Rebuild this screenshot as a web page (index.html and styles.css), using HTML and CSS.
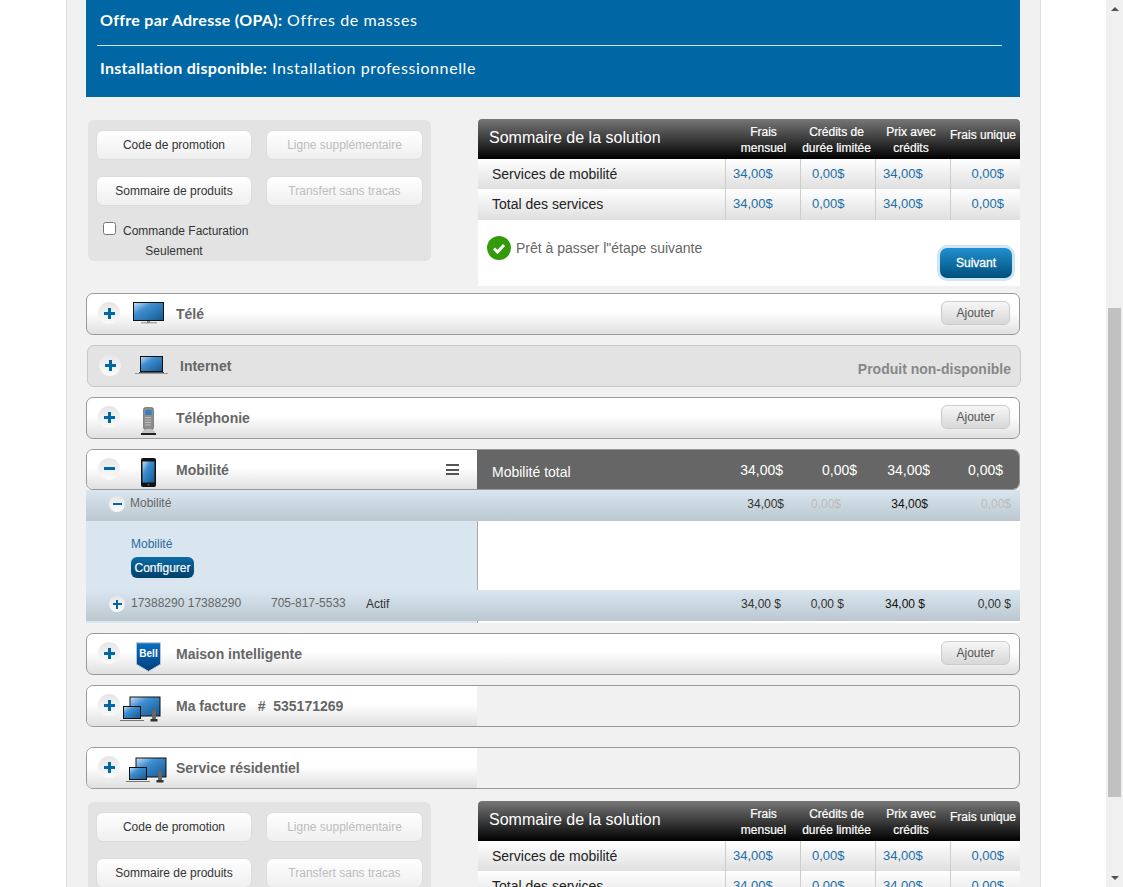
FILE: index.html
```html
<!DOCTYPE html>
<html lang="fr">
<head>
  <meta charset="UTF-8">
  <title>Sommaire de la solution</title>
  <link rel="stylesheet" href="styles.css">
</head>
<body>

  <svg class="defs" width="0" height="0">
    <defs>
      <linearGradient id="screen" x1="0" y1="0" x2="1" y2="1">
        <stop offset="0" stop-color="#cfe2f3"/>
        <stop offset="0.35" stop-color="#3f8fd2"/>
        <stop offset="1" stop-color="#14578f"/>
      </linearGradient>
      <linearGradient id="shield" x1="0" y1="0" x2="0" y2="1">
        <stop offset="0" stop-color="#0a6fc0"/>
        <stop offset="1" stop-color="#003f7d"/>
      </linearGradient>
    </defs>
  </svg>

  <div class="page">
    <main class="sheet">

      <section class="banner">
        <p class="banner-line"><b>Offre par Adresse (OPA):</b> Offres de masses</p>
        <hr class="banner-rule">
        <p class="banner-line"><b>Installation disponible:</b> Installation professionnelle</p>
      </section>

      <section class="summary-block">
        <div class="actions">
          <div class="action-grid">
            <button class="action">Code de promotion</button>
            <button class="action off">Ligne supplémentaire</button>
            <button class="action">Sommaire de produits</button>
            <button class="action off">Transfert sans tracas</button>
          </div>
          <label class="billing"><input type="checkbox"><span>Commande Facturation<br><em>Seulement</em></span></label>
        </div>
        <div class="solution">
          <div class="sol-grid sol-head">
            <div class="sol-title">Sommaire de la solution</div>
            <div>Frais<br>mensuel</div>
            <div>Crédits de<br>durée limitée</div>
            <div>Prix avec<br>crédits</div>
            <div class="one-line">Frais unique</div>
          </div>
          <div class="sol-grid sol-row">
            <div class="sol-name">Services de mobilité</div>
            <div class="val v1">34,00$</div><div class="val v2">0,00$</div><div class="val v1">34,00$</div><div class="val v4">0,00$</div>
          </div>
          <div class="sol-grid sol-row tall">
            <div class="sol-name">Total des services</div>
            <div class="val v1">34,00$</div><div class="val v2">0,00$</div><div class="val v1">34,00$</div><div class="val v4">0,00$</div>
          </div>
          <div class="sol-foot">
            <div class="ready">
              <svg class="check" width="24" height="24" viewBox="0 0 24 24"><circle cx="12" cy="12" r="12" fill="#339a09"/><path d="M7 12.500l3.500 3.500 6.500-7" fill="none" stroke="#fff" stroke-width="3"/></svg>
              <span>Prêt à passer l"étape suivante</span>
            </div>
            <button class="next">Suivant</button>
          </div>
        </div>
      </section>

      <div class="row">
        <span class="toggle"></span>
        <span class="icon">
          <svg width="32" height="24" viewBox="0 0 32 24"><rect x="0.500" y="0.500" width="30" height="18" fill="url(#screen)" stroke="#111"/><rect x="8" y="20" width="16" height="1.500" fill="#aaa"/><rect x="14" y="19" width="3" height="2" fill="#888"/></svg>
        </span>
        <span class="row-name">Télé</span>
        <button class="add">Ajouter</button>
      </div>

      <div class="row off">
        <span class="toggle"></span>
        <span class="icon wide">
          <svg width="34" height="20" viewBox="0 0 34 20"><rect x="5.500" y="0.500" width="22" height="15" fill="url(#screen)" stroke="#111"/><rect x="0" y="17" width="33" height="1" fill="#999"/><rect x="4" y="16" width="25" height="1" fill="#555"/></svg>
        </span>
        <span class="row-name">Internet</span>
        <span class="unavailable">Produit non-disponible</span>
      </div>

      <div class="row">
        <span class="toggle"></span>
        <span class="icon low">
          <svg width="32" height="28" viewBox="0 0 32 28"><rect x="10.500" y="0.500" width="10" height="22" rx="2" fill="#8d8d8d" stroke="#555" stroke-width="0.600"/><rect x="12.500" y="3" width="6" height="5" fill="#2f7fc4"/><path d="M12.500 10.500h6M12.500 13h6M12.500 15.500h6M12.500 18h6" stroke="#eee" stroke-dasharray="1 1"/><path d="M9 26c0-2 2-4 6.500-4s6.500 2 6.500 4z" fill="#c4c4c4"/><rect x="8" y="26" width="15" height="2" fill="#222"/></svg>
        </span>
        <span class="row-name">Téléphonie</span>
        <button class="add">Ajouter</button>
      </div>

      <div class="mobility">
        <div class="row open">
          <div class="open-left">
            <span class="toggle minus"></span>
            <span class="icon low">
              <svg width="32" height="29" viewBox="0 0 32 29"><rect x="8" y="0" width="15" height="29" rx="2" fill="#111"/><rect x="9.500" y="3.500" width="12" height="21" fill="url(#screen)"/><circle cx="15.500" cy="26.800" r="1" fill="#555"/></svg>
            </span>
            <span class="row-name">Mobilité</span>
            <span class="burger"></span>
          </div>
          <div class="open-right">
            <span class="total-name">Mobilité total</span>
            <span class="total-val">34,00$</span><span class="total-val">0,00$</span><span class="total-val">34,00$</span><span class="total-val">0,00$</span>
          </div>
        </div>

        <div class="band first">
          <span class="toggle small minus"></span>
          <span class="band-name">Mobilité</span>
          <div class="band-vals">
            <span class="b1">34,00$</span><span class="b2 faint">0,00$</span><span class="b3 dark">34,00$</span><span class="b4 faint">0,00$</span>
          </div>
        </div>

        <div class="detail">
          <div class="detail-left">
            <a class="detail-link">Mobilité</a>
            <button class="configure">Configurer</button>
          </div>
        </div>

        <div class="band second">
          <span class="toggle small"></span>
          <span class="band-name sn">17388290 17388290</span>
          <span class="band-name phone">705-817-5533</span>
          <span class="status">Actif</span>
          <div class="band-vals line">
            <span class="b1">34,00 $</span><span class="b2">0,00 $</span><span class="b3 dark">34,00 $</span><span class="b4">0,00 $</span>
          </div>
        </div>
        <div class="detail-end"><div></div></div>
      </div>

      <div class="row">
        <span class="toggle"></span>
        <span class="icon low-shield">
          <svg width="32" height="30" viewBox="0 0 32 30"><path d="M3.500 0.800h24v21.500l-12 7-12-7z" fill="url(#shield)" stroke="#b9c4cc"/><text x="15.500" y="15" text-anchor="middle" class="bell">Bell</text></svg>
        </span>
        <span class="row-name">Maison intelligente</span>
        <button class="add">Ajouter</button>
      </div>

      <div class="row half">
        <div class="half-left">
          <span class="toggle"></span>
          <span class="icon bundle">
            <svg width="42" height="26" viewBox="0 0 42 26"><rect x="10" y="1" width="30" height="19" fill="url(#screen)" stroke="#111"/><rect x="3.500" y="10.500" width="17" height="12" fill="url(#screen)" stroke="#111"/><rect x="0" y="24" width="24" height="1" fill="#777"/><rect x="32" y="14" width="4" height="9" rx="1" fill="#666"/><rect x="30.500" y="23" width="7" height="2.500" fill="#333"/></svg>
          </span>
          <span class="row-name">Ma facture &nbsp; # &nbsp;535171269</span>
        </div>
      </div>

      <div class="row half residential">
        <div class="half-left">
          <span class="toggle"></span>
          <span class="icon bundle">
            <svg width="42" height="26" viewBox="0 0 42 26"><rect x="10" y="1" width="30" height="19" fill="url(#screen)" stroke="#111"/><rect x="3.500" y="10.500" width="17" height="12" fill="url(#screen)" stroke="#111"/><rect x="0" y="24" width="24" height="1" fill="#777"/><rect x="32" y="14" width="4" height="9" rx="1" fill="#666"/><rect x="30.500" y="23" width="7" height="2.500" fill="#333"/></svg>
          </span>
          <span class="row-name">Service résidentiel</span>
        </div>
      </div>

      <section class="summary-block last">
        <div class="actions">
          <div class="action-grid">
            <button class="action">Code de promotion</button>
            <button class="action off">Ligne supplémentaire</button>
            <button class="action">Sommaire de produits</button>
            <button class="action off">Transfert sans tracas</button>
          </div>
        </div>
        <div class="solution">
          <div class="sol-grid sol-head">
            <div class="sol-title">Sommaire de la solution</div>
            <div>Frais<br>mensuel</div>
            <div>Crédits de<br>durée limitée</div>
            <div>Prix avec<br>crédits</div>
            <div class="one-line">Frais unique</div>
          </div>
          <div class="sol-grid sol-row">
            <div class="sol-name">Services de mobilité</div>
            <div class="val v1">34,00$</div><div class="val v2">0,00$</div><div class="val v1">34,00$</div><div class="val v4">0,00$</div>
          </div>
          <div class="sol-grid sol-row tall">
            <div class="sol-name">Total des services</div>
            <div class="val v1">34,00$</div><div class="val v2">0,00$</div><div class="val v1">34,00$</div><div class="val v4">0,00$</div>
          </div>
        </div>
      </section>

    </main>
  </div>

  <div class="scrollbar">
    <span class="arrow up"></span>
    <div class="track"><div class="thumb"></div></div>
    <span class="arrow down"></span>
  </div>

</body>
</html>
```

FILE: styles.css
```css
* {
  box-sizing: border-box;
}

html,
body {
  margin: 0;
  height: 887px;
  overflow: hidden;
}

body {
  display: flex;
  background-color: #fff;
  font-family: "Liberation Sans", Arial, sans-serif;
  font-size: 12px;
  color: #333;
}

.defs {
  position: absolute;
}

button {
  font-family: inherit;
  cursor: pointer;
}

.page {
  width: 1106px;
  flex: none;
  height: 887px;
  overflow: hidden;
}

.sheet {
  width: 975px;
  min-height: 1100px;
  margin-left: 66px;
  padding: 0 20px 0 19px;
  background-color: #f1f1f1;
  border-left: 1px solid #ddd;
  border-right: 1px solid #ddd;
}

/* blue banner */
.banner {
  width: 934px;
  height: 97px;
  padding: 0 18px 0 11px;
  background-color: #0066a4;
  color: #fff;
  font-family: Lato, "Open Sans", sans-serif;
  font-size: 16px;
}

.banner-line {
  height: 45px;
  margin: 0;
  padding: 10px 0 0 3px;
  line-height: 20px;
  letter-spacing: 0.6px;
}

.banner-line b {
  letter-spacing: 0.3px;
}

.banner-rule {
  height: 1px;
  margin: 0;
  border: 0;
  background-color: #cfe3f0;
}

.banner-line + .banner-rule + .banner-line {
  padding-top: 12px;
}

/* top block */
.summary-block {
  display: flex;
  align-items: flex-start;
  padding-top: 22px;
}

.summary-block.last {
  padding-top: 12px;
}

.actions {
  width: 343px;
  height: 141px;
  margin: 1px 47px 0 2px;
  padding: 10px 8px 0;
  background-color: #e3e3e3;
  border-radius: 6px;
}

.action-grid {
  display: grid;
  grid-template-columns: 156px 157px;
  column-gap: 14px;
  row-gap: 16px;
}

.action {
  height: 30px;
  padding: 0;
  background: linear-gradient(#fff, #efefef);
  border: 1px solid #dcdcdc;
  border-radius: 7px;
  font-size: 12px;
  color: #333;
}

.action.off {
  color: #bdbdbd;
}

.billing {
  display: flex;
  align-items: flex-start;
  margin: 15px 0 0 7px;
  line-height: 20px;
}

.billing input {
  width: 13px;
  height: 13px;
  margin: 1px 7px 0 0;
}

.billing em {
  display: block;
  width: 102px;
  font-style: normal;
  text-align: center;
}

/* solution table */
.solution {
  width: 542px;
  background-color: #fff;
}

.sol-grid {
  display: grid;
  grid-template-columns: 247px 75px 75px 75px 70px;
}

.sol-head {
  height: 40px;
  padding-top: 1px;
  align-items: center;
  background: linear-gradient(#777, #000);
  border-radius: 4px 4px 0 0;
  color: #fff;
  font-size: 12px;
  font-weight: normal;
  line-height: 16px;
  text-align: center;
  -webkit-text-stroke: 0.2px #fff;
}

.sol-head div:nth-child(2) {
  padding-left: 2px;
}

.sol-head div:nth-child(3) {
  padding-right: 2px;
}

.sol-head div:nth-child(4) {
  padding-right: 3px;
}

.sol-head .one-line {
  margin: 0 -3px 10px -7px;
  white-space: nowrap;
}

.sol-title {
  margin-top: -3px;
  padding-left: 11px;
  font-size: 16px;
  text-align: left;
  -webkit-text-stroke: 0;
}

.sol-row {
  height: 30px;
  background: linear-gradient(#fff, #dfdfdf);
}

.sol-row.tall {
  height: 31px;
}

.sol-name {
  padding: 7px 0 0 14px;
  font-size: 14px;
  color: #222;
}

.val {
  padding-top: 7px;
  font-size: 13px;
  color: #1b6fa8;
  border-left: 1px solid #ccc;
}

.v1 {
  padding-left: 7px;
}

.v2 {
  padding-left: 11px;
}

.v4 {
  padding-right: 16px;
  text-align: right;
}

.sol-foot {
  display: flex;
  justify-content: space-between;
  height: 66px;
  padding: 16px 8px 0 9px;
}

.ready {
  display: flex;
  align-items: flex-start;
  gap: 5px;
  font-size: 14px;
  color: #666;
}

.ready span {
  line-height: 24px;
}

.next {
  width: 72px;
  height: 30px;
  margin-top: 12px;
  background: linear-gradient(#2190cf, #004f7c);
  border: 0;
  border-radius: 7px;
  box-shadow: 0 0 0 3px #cfe5f2;
  font-size: 12px;
  color: #fff;
  -webkit-text-stroke: 0.3px #fff;
}

/* product rows */
.row {
  display: flex;
  align-items: center;
  width: 934px;
  height: 42px;
  margin-bottom: 10px;
  background: linear-gradient(#fff 45%, #e0e0e0);
  border: 1px solid #999;
  border-radius: 7px;
  overflow: hidden;
}

.summary-block + .row {
  margin-top: 7px;
}

.row.off {
  margin-left: 1px;
  background: #e3e3e3;
  border-color: #c8c8c8;
}

.toggle {
  flex: none;
  width: 22px;
  height: 22px;
  margin: -2px 13px 0 11px;
  border-radius: 50%;
  background:
    linear-gradient(#0066a4, #0066a4) center / 11px 3px no-repeat,
    linear-gradient(#0066a4, #0066a4) center / 3px 11px no-repeat,
    linear-gradient(#e6e6e6, #fafafa);
}

.toggle.minus {
  background:
    linear-gradient(#0066a4, #0066a4) center / 11px 3px no-repeat,
    linear-gradient(#e6e6e6, #fafafa);
}

.toggle.small {
  width: 16px;
  height: 16px;
  margin: 6px 6px 0 23px;
  background-size: 9px 2px, 2px 9px, auto;
}

.first .toggle.small {
  margin-right: 5px;
}

.toggle.small.minus {
  background-size: 9px 2px, auto;
}

.icon {
  display: flex;
  flex: none;
  justify-content: center;
  width: 32px;
  margin-right: 11px;
}

.icon svg {
  display: block;
}

.icon.low {
  margin-top: 6px;
}

.icon.low-shield {
  margin-top: 6px;
}

.icon.wide {
  width: 34px;
  margin: 0 11px 0 1px;
}

.icon.bundle {
  width: 42px;
  margin: 6px 14px 0 -13px;
}

.residential .icon.bundle {
  margin: 4px 8px 0 -7px;
}

.row-name {
  font-size: 14px;
  font-weight: bold;
  color: #666;
  white-space: pre;
}

.add {
  width: 69px;
  height: 24px;
  margin: -2px 9px 0 auto;
  padding: 0;
  background: linear-gradient(#f6f6f6, #d8d8d8);
  border: 1px solid #ccc;
  border-radius: 6px;
  font-size: 12px;
  color: #555;
}

.unavailable {
  margin: 5px 9px 0 auto;
  font-size: 14px;
  font-weight: bold;
  color: #888;
}

/* half rows keep the page colour on the right */
.row.half {
  display: block;
  background: none;
}

.half-left {
  display: flex;
  align-items: center;
  width: 390px;
  height: 40px;
  background: linear-gradient(#fff 45%, #e0e0e0);
}

.row.residential {
  margin-top: 20px;
  margin-bottom: 0;
}

/* mobility group */
.mobility {
  width: 934px;
  margin-bottom: 10px;
}

.row.open {
  align-items: stretch;
  height: 41px;
  margin-bottom: 0;
  background: none;
  border-bottom-color: #999;
}

.open-left {
  display: flex;
  flex: none;
  align-items: center;
  width: 390px;
  background: linear-gradient(#fff 45%, #e0e0e0);
}

.burger {
  width: 13px;
  height: 11px;
  margin: 0 18px 0 auto;
  border-top: 2px solid #555;
  border-bottom: 2px solid #555;
  background: linear-gradient(#555, #555) center / 100% 2px no-repeat;
}

.open-right {
  display: grid;
  flex: 1;
  grid-template-columns: 200px 106px 74px 73px 73px;
  align-items: center;
  padding-right: 15px;
  background-color: #666;
  color: #fff;
  font-size: 14px;
}

.total-name {
  padding: 5px 0 0 15px;
}

.total-val {
  text-align: right;
}

.open-right .total-val:nth-child(2) {
  grid-column: 2;
}

.band {
  display: flex;
  align-items: flex-start;
  height: 31px;
  background: linear-gradient(#d9e6ef, #bcc8d0);
}

.band-name {
  padding-top: 6px;
  line-height: 14px;
  color: #666;
}

.band-name.sn {
  width: 140px;
}

.band-name.phone {
  width: 95px;
}

.status {
  padding-top: 7px;
  line-height: 14px;
  color: #333;
}

.band-vals {
  display: grid;
  grid-template-columns: 45px 57px 87px 83px;
  margin-left: auto;
  padding: 7px 9px 0 0;
  line-height: 14px;
  text-align: right;
  white-space: nowrap;
  color: #333;
}

.band-vals.line {
  grid-template-columns: 45px 63px 81px 86px;
}

.faint {
  color: #bbb;
}

.dark {
  color: #111;
}

.detail {
  height: 69px;
  background-color: #fff;
}

.detail-left {
  display: flex;
  flex-direction: column;
  align-items: flex-start;
  width: 392px;
  height: 69px;
  padding: 16px 0 0 45px;
  background-color: #d9e6ef;
  border-right: 1px solid #aaa;
}

.detail-link {
  line-height: 14px;
  color: #2a6a9c;
}

.configure {
  width: 63px;
  height: 21px;
  margin-top: 6px;
  padding: 0;
  background: linear-gradient(#0a6ba5, #00406b);
  border: 0;
  border-radius: 6px;
  font-size: 12px;
  color: #fff;
  -webkit-text-stroke: 0.2px #fff;
}

.detail-end {
  height: 2px;
  background-color: #fff;
}

.detail-end div {
  width: 392px;
  height: 2px;
  background-color: #d9e6ef;
  border-right: 1px solid #aaa;
}

.bell {
  font-family: "Liberation Sans", Arial, sans-serif;
  font-size: 10px;
  font-weight: bold;
  fill: #fff;
}

/* browser scrollbar */
.scrollbar {
  display: flex;
  flex-direction: column;
  align-items: center;
  width: 17px;
  flex: none;
  height: 887px;
  background-color: #f0f0f0;
}

.track {
  flex: 1;
  width: 13px;
  padding-top: 290px;
}

.thumb {
  height: 489px;
  background-color: #c1c1c1;
}

.arrow {
  flex: none;
  width: 0;
  height: 0;
  margin: 7px 0;
  border-left: 4px solid transparent;
  border-right: 4px solid transparent;
}

.arrow.up {
  border-bottom: 4px solid #505050;
}

.arrow.down {
  border-top: 4px solid #505050;
}
```
